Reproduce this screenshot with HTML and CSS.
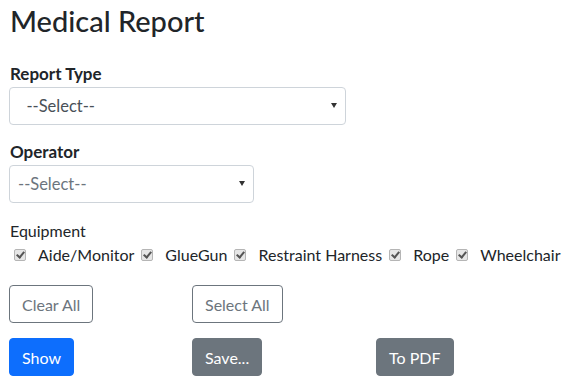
FILE: index.html
```html
<!DOCTYPE html>
<html lang="en">
<head>
    <meta charset="UTF-8">
    <meta name="viewport" content="width=device-width, initial-scale=1.0">
    <title>Medical Report</title>
    <link rel="stylesheet" href="styles.css">
</head>
<body>
    <h1 class="page-title">Medical Report</h1>

    <div class="field">
        <label class="field-label" for="reportType">Report Type</label>
        <div class="select-wrap select-wide">
            <select id="reportType" class="form-select dark-text">
                <option>&nbsp;&nbsp;--Select--</option>
            </select>
        </div>
    </div>

    <div class="field">
        <label class="field-label" for="operator">Operator</label>
        <div class="select-wrap select-narrow">
            <select id="operator" class="form-select">
                <option>--Select--</option>
            </select>
        </div>
    </div>

    <div class="equipment">
        <div class="equipment-title">Equipment</div>
        <div class="check-row">
            <label class="check"><span class="box"></span>Aide/Monitor</label>
            <label class="check"><span class="box"></span>GlueGun</label>
            <label class="check"><span class="box"></span>Restraint Harness</label>
            <label class="check"><span class="box"></span>Rope</label>
            <label class="check"><span class="box"></span>Wheelchair</label>
        </div>
    </div>

    <div class="btn-grid">
        <div><button class="btn btn-outline">Clear All</button></div>
        <div><button class="btn btn-outline">Select All</button></div>
        <div></div>
    </div>
    <div class="btn-grid second">
        <div><button class="btn btn-primary">Show</button></div>
        <div><button class="btn btn-secondary">Save...</button></div>
        <div><button class="btn btn-secondary">To PDF</button></div>
    </div>
</body>
</html>
```

FILE: styles.css
```css
body {
    margin: 0;
    padding: 0 9px;
    font-family: 'Lato', 'Open Sans', sans-serif;
    font-size: 16px;
    color: #212529;
    background-color: #fff;
}
.page-title {
    margin: 0;
    padding-top: 4px;
    font-size: 29px;
    font-weight: 500;
    line-height: 34px;
    padding-left: 1px;
}
.field {
    margin-top: 27px;
}
.field + .field {
    margin-top: 18px;
}
.field-label {
    display: block;
    font-weight: 700;
    font-size: 17px;
    line-height: 18px;
    padding-left: 1px;
    margin-bottom: 4px;
}
.select-wrap {
    position: relative;
}
.select-wide {
    width: 337px;
}
.select-narrow {
    width: 245px;
}
.select-wrap::after {
    content: "";
    position: absolute;
    right: 9px;
    top: 16px;
    border-left: 3.5px solid transparent;
    border-right: 3.5px solid transparent;
    border-top: 5px solid #333;
}
.form-select {
    appearance: none;
    -webkit-appearance: none;
    width: 100%;
    height: 38px;
    padding: 0 8px;
    font-family: inherit;
    font-size: 16.5px;
    color: #6c757d;
    background-color: #fff;
    border: 1px solid #ced4da;
    border-radius: 4px;
}
.form-select.dark-text {
    color: #495057;
}
.equipment {
    margin-top: 18px;
}
.equipment-title {
    font-size: 16px;
    line-height: 20px;
    padding-left: 1px;
}
.check-row {
    display: flex;
    align-items: center;
    margin-top: 4px;
    padding-left: 5px;
    font-size: 16px;
    line-height: 20px;
}
.check {
    display: flex;
    align-items: center;
    margin-right: 7px;
}
.box {
    position: relative;
    width: 10px;
    height: 10px;
    margin-right: 12px;
    border: 1px solid #b5b5b5;
    border-radius: 2px;
    background-color: #e6e6e6;
}
.box::after {
    content: "";
    position: absolute;
    left: 3px;
    top: 0px;
    width: 3px;
    height: 6px;
    border-right: 2px solid #555;
    border-bottom: 2px solid #555;
    transform: rotate(40deg);
}
.btn-grid {
    display: grid;
    grid-template-columns: 183px 184px 183px;
    margin-top: 20px;
}
.btn-grid.second {
    margin-top: 15px;
}
.btn {
    height: 38px;
    padding: 0 12px;
    font-family: inherit;
    font-size: 16px;
    border-radius: 4px;
    cursor: pointer;
}
.btn-outline {
    background-color: #fff;
    color: #6c757d;
    border: 1px solid #6c757d;
}
.btn-primary {
    background-color: #0d6efd;
    color: #fff;
    border: 1px solid #0d6efd;
}
.btn-secondary {
    background-color: #6c757d;
    color: #fff;
    border: 1px solid #6c757d;
}
```
